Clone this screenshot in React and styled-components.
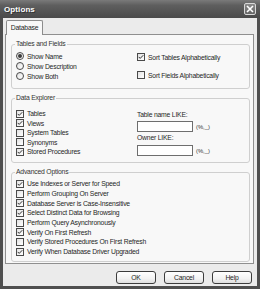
import React from 'react';
import styled, { createGlobalStyle } from 'styled-components';

const Global = createGlobalStyle`
  html, body { margin: 0; padding: 0; background: #4e4e4e; }
  body { font-family: "Liberation Sans", Arial, sans-serif; }
  * { box-sizing: border-box; }
`;

const FONT = '6.8px';
const TRACK = '-0.2px';

const Window = styled.div`
  width: 260px;
  height: 289px;
  background: #4f4f4f;
  display: flex;
  flex-direction: column;
  color: #262626;
`;

const TitleBar = styled.div`
  height: 18px;
  flex: none;
  display: flex;
  align-items: center;
  justify-content: space-between;
  padding: 0 4px 0 4px;
  background: linear-gradient(#7a7a7a, #5e5e5e 30%, #505050 80%, #4a4a4a);
`;

const Title = styled.span`
  color: #fff;
  font-weight: bold;
  font-size: 8px;
  letter-spacing: 0.1px;
  text-shadow: 1px 1px 0 #333;
`;

const CloseButton = styled.div`
  width: 12px;
  height: 12px;
  border: 1px solid #d8d8d8;
  border-radius: 2px;
  background: linear-gradient(#8a8a8a, #666);
  display: flex;
  align-items: center;
  justify-content: center;
`;

const Frame = styled.div`
  flex: 1;
  display: flex;
  flex-direction: column;
  margin: 0 3px 3px 3px;
  padding: 2px 0 0 2px;
  background: #ebebeb;
`;

const TabStrip = styled.div`
  height: 14px;
  display: flex;
  padding-left: 1px;
`;

const Tab = styled.div`
  position: relative;
  z-index: 1;
  width: 37px;
  height: 15px;
  border: 1px solid #8c8c8c;
  border-bottom: none;
  border-radius: 2px 2px 0 0;
  background: #f8f8f8;
  font-size: ${FONT};
  letter-spacing: ${TRACK};
  display: flex;
  align-items: center;
  justify-content: center;
  padding-bottom: 1px;
`;

const Panel = styled.div`
  height: 230px;
  width: 249px;
  border: 1px solid #8f8f8f;
  background: #f8f8f8;
  padding: 0 3px 0 5px;
  display: flex;
  flex-direction: column;
`;

const Group = styled.fieldset`
  margin: 5px 0 0 0;
  min-width: 0;
  border: 1px solid #cfcfcf;
  border-radius: 3px;
  padding: ${p => p.$pt}px 4px ${p => p.$pb}px 4px;
  display: grid;
  grid-template-columns: ${p => p.$cols || '1fr'};
  align-items: start;
`;

const Legend = styled.legend`
  font-size: ${FONT};
  letter-spacing: ${TRACK};
  line-height: 8px;
  padding: 0 1px;
  margin-left: -1px;
  color: #333;
`;

const Column = styled.div`
  display: flex;
  flex-direction: column;
  padding-top: ${p => p.$pt || 0}px;
  gap: ${p => p.$gap || 0}px;
`;

const Row = styled.div`
  height: ${p => p.$h}px;
  display: flex;
  align-items: center;
  gap: 3px;
  font-size: ${FONT};
  letter-spacing: ${TRACK};
  white-space: nowrap;
`;

const Box = styled.span`
  width: 8px;
  height: 8px;
  flex: none;
  border: 1px solid #4a4a4a;
  background: linear-gradient(135deg, #e2e2e2, #fff);
  display: flex;
  align-items: center;
  justify-content: center;
`;

const Radio = styled.span`
  width: 8px;
  height: 8px;
  flex: none;
  border: 1px solid #4a4a4a;
  border-radius: 50%;
  background: linear-gradient(135deg, #e2e2e2, #fff);
  display: flex;
  align-items: center;
  justify-content: center;
  &::after {
    content: '';
    width: 4px;
    height: 4px;
    border-radius: 50%;
    background: ${p => (p.$on ? '#3a3a3a' : 'transparent')};
  }
`;

const FieldLabel = styled.div`
  height: 9px;
  line-height: 9px;
  font-size: ${FONT};
  letter-spacing: ${TRACK};
  margin-top: ${p => p.$mt || 0}px;
`;

const InputLine = styled.div`
  display: flex;
  align-items: center;
  gap: 3px;
  margin-top: ${p => p.$mt || 0}px;
  font-size: 5.8px;
  color: #333;
`;

const TextInput = styled.div`
  width: 56px;
  height: 11px;
  border: 1px solid #6e6e6e;
  background: #fff;
`;

const ButtonRow = styled.div`
  display: flex;
  justify-content: flex-end;
  gap: 8px;
  margin-top: 7px;
  padding-right: 5px;
`;

const Button = styled.div`
  width: 40px;
  height: 13px;
  border: 1px solid #3c3c3c;
  border-radius: 3px;
  background: linear-gradient(#ffffff, #f2f2f2 60%, #dedede);
  font-size: ${FONT};
  letter-spacing: ${TRACK};
  display: flex;
  align-items: center;
  justify-content: center;
`;

const Check = () => (
  <svg width="6" height="6" viewBox="0 0 6 6">
    <path d="M0.7 2.9 L2.2 4.4 L5.3 1.2" fill="none" stroke="#333" strokeWidth="1" />
  </svg>
);

const CheckRow = ({ on, h, children }) => (
  <Row $h={h}>
    <Box>{on && <Check />}</Box>
    <span>{children}</span>
  </Row>
);

const RadioRow = ({ on, children }) => (
  <Row $h={10}>
    <Radio $on={on} />
    <span>{children}</span>
  </Row>
);

const explorer = [
  ['Tables', true],
  ['Views', true],
  ['System Tables', false],
  ['Synonyms', false],
  ['Stored Procedures', true],
];

const advanced = [
  ['Use Indexes or Server for Speed', true],
  ['Perform Grouping On Server', false],
  ['Database Server is Case-Insensitive', true],
  ['Select Distinct Data for Browsing', true],
  ['Perform Query Asynchronously', false],
  ['Verify On First Refresh', true],
  ['Verify Stored Procedures On First Refresh', false],
  ['Verify When Database Driver Upgraded', true],
];

export default function App() {
  return (
    <>
      <Global />
      <Window>
        <TitleBar>
          <Title>Options</Title>
          <CloseButton>
            <svg width="8" height="8" viewBox="0 0 8 8">
              <path d="M1 1 L7 7 M7 1 L1 7" stroke="#fff" strokeWidth="1.6" />
            </svg>
          </CloseButton>
        </TitleBar>
        <Frame>
          <TabStrip>
            <Tab>Database</Tab>
          </TabStrip>
          <Panel>
            <Group $pt={3} $pb={7} $cols="121px 1fr">
              <Legend>Tables and Fields</Legend>
              <Column>
                <RadioRow on>Show Name</RadioRow>
                <RadioRow>Show Description</RadioRow>
                <RadioRow>Show Both</RadioRow>
              </Column>
              <Column $pt={1} $gap={8}>
                <CheckRow h={10} on>Sort Tables Alphabetically</CheckRow>
                <CheckRow h={10}>Sort Fields Alphabetically</CheckRow>
              </Column>
            </Group>
            <Group $pt={7} $pb={5.5} $cols="121px 1fr">
              <Legend>Data Explorer</Legend>
              <Column>
                {explorer.map(([t, on]) => (
                  <CheckRow key={t} h={9.5} on={on}>{t}</CheckRow>
                ))}
              </Column>
              <Column $pt={1}>
                <FieldLabel>Table name LIKE:</FieldLabel>
                <InputLine $mt={2}>
                  <TextInput />
                  <span>(%,_)</span>
                </InputLine>
                <FieldLabel $mt={1}>Owner LIKE:</FieldLabel>
                <InputLine $mt={3}>
                  <TextInput />
                  <span>(%,_)</span>
                </InputLine>
              </Column>
            </Group>
            <Group $pt={3} $pb={4.4}>
              <Legend>Advanced Options</Legend>
              <Column>
                {advanced.map(([t, on]) => (
                  <CheckRow key={t} h={9.7} on={on}>{t}</CheckRow>
                ))}
              </Column>
            </Group>
          </Panel>
          <ButtonRow>
            <Button>OK</Button>
            <Button>Cancel</Button>
            <Button>Help</Button>
          </ButtonRow>
        </Frame>
      </Window>
    </>
  );
}
